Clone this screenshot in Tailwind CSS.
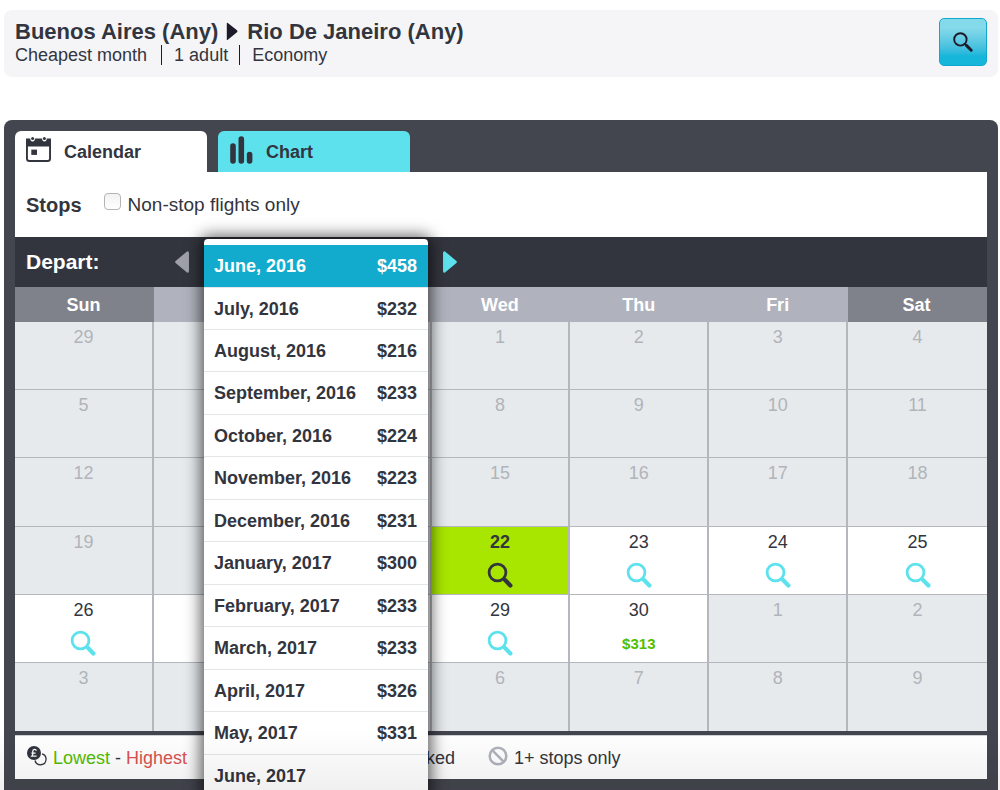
<!DOCTYPE html>
<html lang="en">
<head>
<meta charset="utf-8">
<meta name="viewport" content="width=device-width, initial-scale=1">
<title>Buenos Aires to Rio De Janeiro flights</title>
<script src="https://cdn.jsdelivr.net/npm/@tailwindcss/browser@4"></script>
</head>
<body class="bg-white font-['Liberation_Sans',Arial,sans-serif] text-[18px] leading-5 text-[#33353e]">
<svg class="hidden" aria-hidden="true">
  <symbol id="lens" viewBox="0 0 26 26"><circle cx="10.5" cy="10.5" r="8.4" fill="none" stroke="currentColor" stroke-width="2.8"/><path d="M16 16 18.5 18.5" stroke="currentColor" stroke-width="3.2"/><path d="M18.3 18.3 23.4 23.4" stroke="currentColor" stroke-width="4.2" stroke-linecap="round"/></symbol>
</svg>
<div class="h-screen overflow-hidden pl-1 pr-[2px] pt-[10px]">
  <header class="flex items-start justify-between rounded-lg bg-[#f5f5f8] pb-[11px] pl-[11px] pr-[11px] pt-2">
    <div class="pt-px">
      <h1 class="flex items-center text-[22px] font-bold leading-[26px]">Buenos Aires (Any)
        <svg class="ml-2 mr-[9px] h-5 w-3" viewBox="0 0 12 20" role="img" aria-label="to"><path d="M.8 1.2 Q.8.2 1.8 1L11 8.2Q12 9.2 11 10.2L1.8 17.8Q.8 18.4.8 17.4Z" fill="#1f1a2a"/></svg>
        Rio De Janeiro (Any)</h1>
      <p class="flex items-center">
        <span>Cheapest month</span>
        <span class="ml-[14px] border-l border-[#1f1a2a] pl-3">1 adult</span>
        <span class="ml-[11px] border-l border-[#1f1a2a] pl-3">Economy</span>
      </p>
    </div>
    <button type="button" aria-label="Search" class="flex size-12 items-center justify-center rounded-[5px] border border-[#10a9cd] bg-linear-to-b from-[#84d9ea] from-20% to-[#16b6da] to-80% text-[#1f1a2a]">
      <svg class="size-5" viewBox="0 0 20 20" fill="none" stroke="currentColor"><circle cx="7.4" cy="7.4" r="6.2" stroke-width="1.9"/><path d="M11.7 11.7 13.5 13.5" stroke-width="2"/><path d="M13.4 13.4 18.2 18.2" stroke-width="2.9" stroke-linecap="round"/></svg>
    </button>
  </header>

  <main class="mt-[43px] rounded-t-lg bg-[#44464f] px-[11px] pb-12 pt-[11px]">
    <div role="tablist" class="flex gap-[11px] text-[18px] font-bold">
      <button type="button" role="tab" aria-selected="true" class="flex h-[41px] w-48 items-center rounded-t-md bg-white pl-[11px]">
        <svg class="-mt-1 mr-[13px] h-[25px] w-[25px]" viewBox="0 0 25 25" fill="currentColor"><path fill-rule="evenodd" d="M0 1.5H4.2Q4.4 4.5 6.6 4.5T9 1.5H16Q16.2 4.5 18.4 4.5T20.8 1.5H25V21.5Q25 25 21.5 25H3.5Q0 25 0 21.5ZM1.9 9.5V21.4Q1.9 23.1 3.6 23.1H21.4Q23.1 23.1 23.1 21.4V9.5Z"/><circle cx="6.6" cy="1.5" r="1.5"/><circle cx="18.4" cy="1.5" r="1.5"/><path d="M5.3 12.6H11V17.9H5.3Z"/></svg>
        Calendar
      </button>
      <button type="button" role="tab" aria-selected="false" class="flex h-[41px] w-48 items-center rounded-t-md bg-[#5de2ed] pl-3">
        <svg class="-mt-1 mr-[13px] h-7 w-[23px]" viewBox="0 0 23 28" stroke="currentColor" stroke-width="5.6" stroke-linecap="round"><path d="M3 10V25M11.3 3V25M19.6 18.5V25"/></svg>
        Chart
      </button>
    </div>

    <section class="flex h-[65px] items-center bg-white pl-[11px]">
      <h2 class="mr-[22px] text-[20px] font-bold">Stops</h2>
      <input id="nonstop" type="checkbox" class="mb-[7px] mr-[7px] size-[17px] appearance-none rounded-[4px] border border-[#b4b4b8] bg-linear-to-b from-[#f2f2f2] to-white">
      <label for="nonstop" class="text-[19px]">Non-stop flights only</label>
    </section>

    <section class="relative flex h-[50px] items-center bg-[#33353e] pl-[11px]">
      <h2 class="w-[149px] text-[21px] font-bold text-white">Depart:</h2>
      <button type="button" aria-label="Previous month" class="text-[#9fa1aa]"><svg class="h-[22px] w-[14px]" viewBox="0 0 14 22" fill="currentColor"><path d="M12 .4Q14 0 14 2V20Q14 22.4 12 21.6L.6 12Q-.3 11 .6 10Z"/></svg></button>
      <div class="w-[254px]"></div>
      <button type="button" aria-label="Next month" class="text-[#5de2ed]"><svg class="h-[22px] w-[14px]" viewBox="0 0 14 22" fill="currentColor"><path d="M2 .4Q0 0 0 2V20Q0 22.4 2 21.6L13.4 12Q14.3 11 13.4 10Z"/></svg></button>

      <ul role="listbox" aria-label="Departure month" class="absolute left-[189px] top-[2px] z-10 w-56 rounded-t bg-white pt-[6px] font-bold shadow-[0_0_16px_3px_rgba(0,0,0,0.65)] [&_button]:flex [&_button]:size-full [&_button]:items-center [&_button]:justify-between [&_button]:pl-[10px] [&_button]:pr-[11px] [&_li]:h-[42px] [&_li:nth-child(2n+4)]:h-[43px] [&_li+li]:border-t [&_li+li]:border-[#e4e7ea]">
        <li role="option" aria-selected="true" class="bg-[#13abcd] text-white"><button type="button">June, 2016 <span>$458</span></button></li>
        <li role="option"><button type="button">July, 2016 <span>$232</span></button></li>
        <li role="option"><button type="button">August, 2016 <span>$216</span></button></li>
        <li role="option"><button type="button">September, 2016 <span>$233</span></button></li>
        <li role="option"><button type="button">October, 2016 <span>$224</span></button></li>
        <li role="option"><button type="button">November, 2016 <span>$223</span></button></li>
        <li role="option"><button type="button">December, 2016 <span>$231</span></button></li>
        <li role="option"><button type="button">January, 2017 <span>$300</span></button></li>
        <li role="option"><button type="button">February, 2017 <span>$233</span></button></li>
        <li role="option"><button type="button">March, 2017 <span>$233</span></button></li>
        <li role="option"><button type="button">April, 2017 <span>$326</span></button></li>
        <li role="option"><button type="button">May, 2017 <span>$331</span></button></li>
        <li role="option"><button type="button">June, 2017</button></li>
      </ul>
    </section>

    <table class="w-full table-fixed border-separate border-spacing-0 text-center [&_button]:mx-auto [&_button]:mt-[10px] [&_button]:block [&_button]:text-[#5de2ed] [&_svg]:size-[26px] [&_td]:h-[68px] [&_td]:border-[#b4b7bd] [&_td]:bg-white [&_td]:p-0 [&_td]:pt-[5px] [&_td]:align-top [&_td:not(:last-child)]:border-r-2 [&_tr:not(:last-child)>td]:border-b [&_tbody>tr:nth-child(3)>td]:h-[69px] [&_th]:h-[35px] [&_th]:bg-[#b0b3bd] [&_th]:p-0 [&_th]:pr-[2px] [&_th]:text-white [&_th:first-child]:bg-[#80828b] [&_th:last-child]:bg-[#80828b] [&_td.off]:bg-[#e6eaed] [&_td.off]:text-[#b1b4b9]">
      <thead><tr><th>Sun</th><th aria-label="Monday"></th><th aria-label="Tuesday"></th><th>Wed</th><th>Thu</th><th>Fri</th><th>Sat</th></tr></thead>
      <tbody>
        <tr><td class="off">29</td><td class="off"></td><td class="off"></td><td class="off">1</td><td class="off">2</td><td class="off">3</td><td class="off">4</td></tr>
        <tr><td class="off">5</td><td class="off"></td><td class="off"></td><td class="off">8</td><td class="off">9</td><td class="off">10</td><td class="off">11</td></tr>
        <tr><td class="off">12</td><td class="off"></td><td class="off"></td><td class="off">15</td><td class="off">16</td><td class="off">17</td><td class="off">18</td></tr>
        <tr><td class="off">19</td><td class="off"></td><td class="off"></td>
          <td class="bg-[#a8e600]! font-bold">22<button type="button" aria-label="Search 22 June" class="text-[#33353e]!"><svg><use href="#lens"/></svg></button></td>
          <td>23<button type="button" aria-label="Search 23 June"><svg><use href="#lens"/></svg></button></td>
          <td>24<button type="button" aria-label="Search 24 June"><svg><use href="#lens"/></svg></button></td>
          <td>25<button type="button" aria-label="Search 25 June"><svg><use href="#lens"/></svg></button></td></tr>
        <tr><td>26<button type="button" aria-label="Search 26 June"><svg><use href="#lens"/></svg></button></td><td></td><td></td>
          <td>29<button type="button" aria-label="Search 29 June"><svg><use href="#lens"/></svg></button></td>
          <td>30<a href="#" class="mt-[14px] block text-[15px] font-bold text-[#54bd00]">$313</a></td>
          <td class="off">1</td><td class="off">2</td></tr>
        <tr><td class="off">3</td><td class="off"></td><td class="off"></td><td class="off">6</td><td class="off">7</td><td class="off">8</td><td class="off">9</td></tr>
      </tbody>
    </table>

    <footer class="mt-1 flex h-11 items-center border-t border-[#d0d1d6] bg-white pl-3">
      <svg class="-mt-1 mr-[6px] h-5 w-5" viewBox="0 0 20 20" fill="none"><path d="M15 7.8A5.6 5.6 0 1 1 8 14.5" stroke="#33353e" stroke-width="1.3"/><circle cx="7" cy="7" r="7" fill="#33353e"/><path d="M9.6 4.4Q7.4 2.7 6.2 4Q5.5 5 5.8 7Q6 9 4.8 10.2H9.6M4.4 7.2H8.6" stroke="#fff" stroke-width="1.3"/></svg>
      <span class="w-[150px]"><span class="text-[#54bd00]">Lowest</span> - <span class="text-[#d9534f]">Highest</span></span>
      <span class="w-[252px] whitespace-nowrap text-right">Not checked</span>
      <svg class="-mt-1 ml-[33px] mr-[6px] size-5" viewBox="0 0 20 20" fill="none" stroke="#b0b3bb" stroke-width="2.5"><circle cx="10" cy="10" r="8.3"/><path d="M4.2 4.2 15.8 15.8"/></svg>
      <span>1+ stops only</span>
    </footer>
  </main>
  <div class="pointer-events-none fixed inset-x-0 bottom-0 z-20 h-[60px] bg-linear-to-b from-transparent to-black/6"></div>
</div>
</body>
</html>
